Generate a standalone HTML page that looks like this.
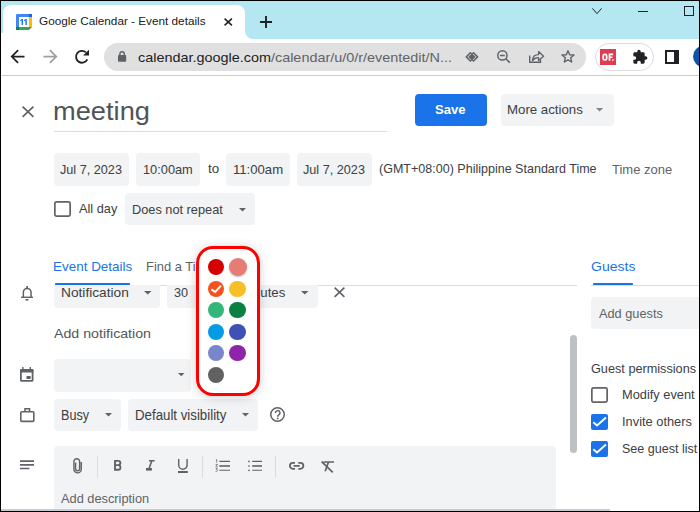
<!DOCTYPE html>
<html><head><meta charset="utf-8">
<style>
*{margin:0;padding:0;box-sizing:border-box}
html,body{width:700px;height:512px;overflow:hidden;background:#fff}
body{position:relative;font-family:"Liberation Sans",sans-serif;color:#3c4043}
.a{position:absolute}
.t{position:absolute;white-space:nowrap;line-height:1;transform-origin:0 0}
.chip{position:absolute;background:#f1f3f4;border-radius:4px}
svg{position:absolute;overflow:visible}
</style></head><body>
<!-- tab strip -->
<div class="a" style="left:0;top:0;width:700px;height:39px;background:#b4e7f2"></div>
<div class="a" style="left:3px;top:5px;width:242px;height:34px;background:#fff;border-radius:8px 8px 0 0"></div>
<div class="a" style="left:0;top:33px;width:4px;height:6px;background:#fff;border-radius:0 0 0 0"></div>
<!-- tab foot curve right -->
<div class="a" style="left:245px;top:31px;width:8px;height:8px;background:#fff"></div>
<div class="a" style="left:245px;top:23px;width:16px;height:16px;background:#b4e7f2;border-radius:0 0 0 8px"></div>
<!-- favicon -->
<svg style="left:16px;top:14px" width="16" height="16" viewBox="0 0 16 16">
<rect x="0" y="0" width="16" height="16" rx="1.2" fill="#4285f4"/>
<rect x="13" y="0" width="3" height="3" fill="#1967d2"/>
<rect x="13" y="3" width="3" height="10" fill="#fbbc04"/>
<rect x="0" y="13" width="13" height="3" fill="#34a853"/>
<rect x="0" y="13" width="3" height="3" fill="#188038"/>
<path d="M13 13H16L13 16z" fill="#ea4335"/>
<path d="M16 13V16H13z" fill="#fff"/>
<rect x="3" y="3" width="10" height="10" fill="#fff"/>
<path d="M5.6 4.9H7V11H5.6V6.6L4.3 7.2V6.1z M9.4 4.9H10.8V11H9.4V6.6L8.1 7.2V6.1z" fill="#1a73e8"/>
</svg>
<svg style="left:223.6px;top:17.8px" width="8.5" height="8" viewBox="0 0 8.5 8"><path d="M0.6 0.6L7.9 7.4M7.9 0.6L0.6 7.4" stroke="#202124" stroke-width="1.5"/></svg>
<svg style="left:260px;top:16px" width="12" height="12" viewBox="0 0 12 12"><path d="M6 0V12M0 6H12" stroke="#202124" stroke-width="1.9"/></svg>
<!-- window controls -->
<svg style="left:592px;top:7.7px" width="10" height="6.5" viewBox="0 0 10 6.5"><path d="M0.4 0.4L5 5.6L9.6 0.4" stroke="#202124" stroke-width="1" fill="none"/></svg>
<div class="a" style="left:638px;top:11px;width:10px;height:1px;background:#202124"></div>
<div class="a" style="left:684px;top:6px;width:10px;height:10px;border:1px solid #202124"></div>

<!-- toolbar -->
<svg style="left:7.3px;top:46px" width="21" height="21" viewBox="0 0 24 24"><path d="M20 11H7.83l5.59-5.59L12 4l-8 8 8 8 1.41-1.41L7.83 13H20v-2z" fill="#202124"/></svg>
<svg style="left:39.9px;top:46px" width="21" height="21" viewBox="0 0 24 24"><path d="M12 4l-1.41 1.41L16.17 11H4v2h12.17l-5.58 5.59L12 20l8-8z" fill="#a0a0a0"/></svg>
<svg style="left:70px;top:45px" width="25" height="25" viewBox="70 45 25 25"><path d="M87.3 59.3A5.9 5.9 0 1 1 85.9 52.4" stroke="#202124" stroke-width="1.85" fill="none"/><path d="M89 49.7V55.6H83.1z" fill="#202124"/></svg>
<div class="a" style="left:104px;top:43px;width:482px;height:28px;background:#e0e0e0;border-radius:14px"></div>
<svg style="left:117.9px;top:50.9px" width="8.2" height="11" viewBox="0 0 8.2 11"><path d="M1.9 4.5V3a2.2 2.2 0 0 1 4.4 0V4.5" stroke="#5f6368" stroke-width="1.4" fill="none"/><rect x="0" y="4" width="8.2" height="6.8" rx="0.8" fill="#5f6368"/></svg>
<!-- omnibox icons -->
<svg style="left:460px;top:46px" width="24" height="20" viewBox="460 46 24 20"><path d="M470.4 52.8L474.5 56.9L470.4 61L466.3 56.9zM473.5 52.8L477.6 56.9L473.5 61L469.4 56.9z" stroke="#5f6368" stroke-width="1.5" fill="none" stroke-linejoin="round"/><path d="M471.95 54.35L474.5 56.9L471.95 59.45L469.4 56.9z" fill="#5f6368"/></svg>
<svg style="left:497.4px;top:50.4px" width="13.3" height="13" viewBox="0 0 13.3 13"><circle cx="5.4" cy="5.4" r="4.6" stroke="#5f6368" stroke-width="1.5" fill="none"/><path d="M3 5.4H7.8M8.8 8.8L12.8 12.6" stroke="#5f6368" stroke-width="1.5"/></svg>
<svg style="left:528.9px;top:50.4px" width="15.4" height="13" viewBox="0 0 15.4 13"><path d="M0.7 5.5V12.3H11.5V9.8" stroke="#5f6368" stroke-width="1.4" fill="none"/><path d="M3.5 10.5C3.8 6.5 6.5 4.6 9.6 4.6V1.6L14.6 6.2L9.6 10.6V7.7C7 7.7 5 8.5 3.5 10.5z" stroke="#5f6368" stroke-width="1.3" fill="none" stroke-linejoin="round"/></svg>
<svg style="left:561px;top:50.4px" width="14" height="12.5" viewBox="0 0 14 12.5"><path d="M7 0.8L8.7 4.7L13 5L9.7 7.8L10.7 12L7 9.8L3.3 12L4.3 7.8L1 5L5.3 4.7z" stroke="#5f6368" stroke-width="1.4" fill="none" stroke-linejoin="round"/></svg>
<!-- extension pill -->
<div class="a" style="left:595px;top:43px;width:59px;height:28px;border:1px solid #dadce0;border-radius:14px"></div>
<div class="a" style="left:600px;top:49px;width:16px;height:16px;background:#e23b51"></div>
<svg style="left:596px;top:44px" width="28" height="26" viewBox="596 44 28 26"><rect x="603.15" y="54.4" width="3.5" height="5.5" rx="1.5" stroke="#fff" stroke-width="1.8" fill="none"/><path d="M608.6 53.5H613.1V55.2H610.4V56.4H612.4V58H610.4V60.8H608.6z" fill="#fff"/><path d="M612.3 59.2H613.9L613.2 60.9H612.3z" fill="#fff"/></svg>
<svg style="left:631.7px;top:49.3px" width="16" height="16" viewBox="0 0 24 24"><path d="M20.5 11H19V7c0-1.1-.9-2-2-2h-4V3.5C13 2.12 11.880 1 10.5 1S8 2.12 8 3.5V5H4c-1.1 0-1.99.9-1.99 2v3.8H3.5c1.49 0 2.7 1.21 2.7 2.7s-1.21 2.7-2.7 2.7H2V20c0 1.1.9 2 2 2h3.8v-1.5c0-1.49 1.21-2.7 2.7-2.7 1.49 0 2.7 1.21 2.7 2.7V22H17c1.1 0 2-.9 2-2v-4h1.5c1.38 0 2.5-1.12 2.5-2.5S21.88 11 20.5 11z" fill="#202124"/></svg>
<div class="a" style="left:665px;top:50px;width:14px;height:14px;border:2px solid #202124;border-right-width:5px"></div>
<div class="a" style="left:692.8px;top:46.3px;width:20.8px;height:20.8px;border-radius:50%;background:#0b57a8"></div>
<div class="a" style="left:0;top:75px;width:700px;height:1px;background:#cccccc"></div>

<!-- page -->
<svg style="left:22px;top:106.4px" width="12" height="11.5" viewBox="0 0 12 11.5"><path d="M0.6 0.6L11.4 10.9M11.4 0.6L0.6 10.9" stroke="#5f6368" stroke-width="1.7"/></svg>
<div class="a" style="left:54px;top:131px;width:333px;height:1px;background:#dadce0"></div>
<div class="a" style="left:415px;top:94px;width:72px;height:32px;background:#1a73e8;border-radius:4px"></div>
<div class="chip" style="left:501px;top:94px;width:113px;height:32px"></div>
<svg style="left:595.7px;top:108.3px" width="7.2" height="3.6" viewBox="0 0 7.2 3.6"><path d="M0 0H7.2L3.6 3.6z" fill="#80868b"/></svg>

<div class="chip" style="left:54px;top:153px;width:75px;height:33px"></div>
<div class="chip" style="left:136px;top:153px;width:64px;height:33px"></div>
<div class="chip" style="left:226px;top:153px;width:64px;height:33px"></div>
<div class="chip" style="left:297px;top:153px;width:74.5px;height:33px"></div>

<svg style="left:54px;top:201px" width="17" height="16" viewBox="0 0 17 16"><rect x="0.85" y="0.85" width="15.3" height="14.3" rx="1.6" stroke="#5f6368" stroke-width="1.7" fill="none"/></svg>
<div class="chip" style="left:125px;top:193px;width:130px;height:32px"></div>
<svg style="left:239.4px;top:207.6px" width="7" height="3.5" viewBox="0 0 7 3.5"><path d="M0 0H7L3.5 3.5z" fill="#5f6368"/></svg>

<!-- tab bar lines -->
<div class="a" style="left:54px;top:285px;width:523px;height:1px;background:#dadce0"></div>
<div class="a" style="left:591px;top:285px;width:109px;height:1px;background:#dadce0"></div>

<!-- notification row -->
<svg style="left:21px;top:286px" width="12" height="15" viewBox="0 0 12 15"><path d="M2.35 11.5V6.5A3.85 4.1 0 0 1 10.05 6.5V11.5" stroke="#5f6368" stroke-width="1.5" fill="none"/><path d="M0.1 11.3H12" stroke="#5f6368" stroke-width="1.4"/><rect x="5.2" y="0.1" width="1.8" height="2" fill="#5f6368"/><path d="M4.4 13.1H7.5V13.4A1.55 1.3 0 0 1 4.4 13.4z" fill="#5f6368"/></svg>
<div class="chip" style="left:54px;top:285px;width:105.5px;height:22.5px;border-radius:0 0 4px 4px"></div>
<svg style="left:144.4px;top:290.7px" width="7.5" height="3.5" viewBox="0 0 7.5 3.5"><path d="M0 0H7.5L3.75 3.5z" fill="#5f6368"/></svg>
<div class="chip" style="left:167px;top:285px;width:151px;height:22.5px;border-radius:0 0 4px 4px"></div>
<svg style="left:300.5px;top:290.7px" width="7.5" height="3.5" viewBox="0 0 7.5 3.5"><path d="M0 0H7.5L3.75 3.5z" fill="#5f6368"/></svg>
<svg style="left:334.3px;top:287px" width="11" height="10.5" viewBox="0 0 11 10.5"><path d="M0.6 0.6L10.4 9.9M10.4 0.6L0.6 9.9" stroke="#5f6368" stroke-width="1.6"/></svg>

<svg style="left:20px;top:367px" width="13.5" height="15" viewBox="0 0 13.5 15"><path d="M2.9 0V2.5M10.3 0V2.5" stroke="#5f6368" stroke-width="1.4"/><rect x="0.9" y="2.9" width="11.7" height="11" rx="1" stroke="#5f6368" stroke-width="1.8" fill="none"/><rect x="0" y="2" width="13.5" height="3.6" rx="1" fill="#5f6368"/><rect x="6.4" y="9" width="4.4" height="3" rx="0.9" fill="#5f6368"/></svg>
<div class="chip" style="left:54px;top:359px;width:137px;height:33px"></div>
<svg style="left:177.7px;top:372.6px" width="6.5" height="3.3" viewBox="0 0 6.5 3.3"><path d="M0 0H6.5L3.25 3.3z" fill="#5f6368"/></svg>

<svg style="left:19.7px;top:407.6px" width="14.6" height="14.2" viewBox="0 0 14.6 14.2"><rect x="0.8" y="3.8" width="13" height="9.6" rx="1" stroke="#5f6368" stroke-width="1.6" fill="none"/><path d="M5 3.8V0.8H9.5V3.8" stroke="#5f6368" stroke-width="1.6" fill="none"/></svg>
<div class="chip" style="left:54px;top:399px;width:67px;height:32px"></div>
<svg style="left:105.1px;top:413.2px" width="7" height="3.5" viewBox="0 0 7 3.5"><path d="M0 0H7L3.5 3.5z" fill="#5f6368"/></svg>
<div class="chip" style="left:128px;top:399px;width:130px;height:32px"></div>
<svg style="left:242px;top:413px" width="7" height="3.5" viewBox="0 0 7 3.5"><path d="M0 0H7L3.5 3.5z" fill="#5f6368"/></svg>
<svg style="left:270.1px;top:407.3px" width="15" height="15" viewBox="0 0 15 15"><circle cx="7.5" cy="7.5" r="6.75" stroke="#5f6368" stroke-width="1.5" fill="none"/><path d="M5.4 5.9a2.3 2.3 0 1 1 3.4 2c-.8.5-1.1.9-1.1 1.8" stroke="#5f6368" stroke-width="1.5" fill="none"/><rect x="6.9" y="10.7" width="1.6" height="1.6" fill="#5f6368"/></svg>

<!-- description -->
<svg style="left:19.8px;top:459px" width="14" height="11" viewBox="0 0 14 11"><path d="M0 2.1H14M0 5.9H14M0 9.5H9.3" stroke="#5f6368" stroke-width="1.6"/></svg>
<div class="chip" style="left:54px;top:446px;width:502px;height:70px"></div>
<svg style="left:73px;top:458.4px" width="9.2" height="15.2" viewBox="0 0 9.2 15.2"><path d="M2.6 4.5V10.8a2 2 0 0 0 4 0V3.6a2.85 2.85 0 0 0-5.7 0V11.2a3.7 3.7 0 0 0 7.4 0V4" stroke="#5f6368" stroke-width="1.4" fill="none"/></svg>
<div class="a" style="left:97px;top:456px;width:1px;height:22px;background:#dadce0"></div>
<svg style="left:113.7px;top:460.1px" width="7.5" height="10.7" viewBox="0 0 7.5 10.7"><path d="M1 0.9H4.2a2.2 2.1 0 0 1 0 4.2H1zM1 5.1H4.6a2.4 2.4 0 0 1 0 4.7H1z" stroke="#5f6368" stroke-width="1.9" fill="none"/></svg>
<svg style="left:145.6px;top:460.1px" width="8.6" height="10.6" viewBox="0 0 8.6 10.6"><path d="M3 0.75H8.6M0 9.3H5.8M5.8 0.75L2.8 9.3" stroke="#5f6368" stroke-width="1.6" fill="none"/><rect x="0" y="8" width="5.8" height="2.6" fill="#5f6368"/></svg>
<svg style="left:177.6px;top:459px" width="9.8" height="14" viewBox="0 0 9.8 14"><path d="M0.7 0V6.1a4.2 4.2 0 0 0 8.4 0V0" stroke="#5f6368" stroke-width="1.4" fill="none"/><rect x="0" y="12" width="9.8" height="2" fill="#5f6368"/></svg>
<div class="a" style="left:202px;top:456px;width:1px;height:22px;background:#dadce0"></div>
<svg style="left:215px;top:459px" width="15" height="12.5" viewBox="0 0 15 12.5"><path d="M4.3 2.4H15M4.3 11.3H15" stroke="#5f6368" stroke-width="1.1"/><path d="M4.3 7H15" stroke="#5f6368" stroke-width="1.6"/><path d="M0.9 1.1L1.7 0.6V3.6M0.6 5.4H2.5L0.8 7.9H2.7M0.7 9.6H2.5L1.5 10.8C2.9 10.9 2.9 12.7 0.6 12.4" stroke="#5f6368" stroke-width="0.75" fill="none"/></svg>
<svg style="left:248px;top:459px" width="14" height="12.5" viewBox="0 0 14 12.5"><path d="M4.2 2.4H14M4.2 11.3H14" stroke="#5f6368" stroke-width="1.1"/><path d="M4.2 7H14" stroke="#5f6368" stroke-width="1.6"/><circle cx="1" cy="2.4" r="0.85" fill="#5f6368"/><circle cx="1" cy="7" r="0.85" fill="#5f6368"/><circle cx="1" cy="11.3" r="0.85" fill="#5f6368"/></svg>
<div class="a" style="left:275px;top:456px;width:1px;height:22px;background:#dadce0"></div>
<svg style="left:288.5px;top:461.8px" width="15.3" height="7.7" viewBox="0 0 15.3 7.7"><path d="M6 0.9H3.85a2.95 2.95 0 0 0 0 5.9H6M9.3 0.9H11.45a2.95 2.95 0 0 1 0 5.9H9.3M4.6 3.85H10.7" stroke="#5f6368" stroke-width="1.8" fill="none"/></svg>
<svg style="left:321px;top:461px" width="13" height="12" viewBox="0 0 13 12"><path d="M2.5 1H13M7.5 1L4.2 10.2M0.6 0.6L11.8 11.4" stroke="#5f6368" stroke-width="1.7" fill="none"/></svg>

<!-- right panel -->
<div class="chip" style="left:591px;top:297px;width:120px;height:32px"></div>
<svg style="left:591.2px;top:387px" width="17" height="16" viewBox="0 0 17 16"><rect x="0.85" y="0.85" width="15.3" height="14.3" rx="1.6" stroke="#5f6368" stroke-width="1.7" fill="none"/></svg>
<svg style="left:591px;top:414px" width="17" height="16" viewBox="0 0 17 16"><rect width="17" height="16" rx="2" fill="#1a73e8"/><path d="M2.3 8.3L6 11.5L15 3.5" stroke="#fff" stroke-width="1.9" fill="none"/></svg>
<svg style="left:591px;top:441px" width="17" height="16" viewBox="0 0 17 16"><rect width="17" height="16" rx="2" fill="#1a73e8"/><path d="M2.3 8.3L6 11.5L15 3.5" stroke="#fff" stroke-width="1.9" fill="none"/></svg>

<!-- scrollbar -->
<div class="a" style="left:570px;top:335px;width:7px;height:118px;background:#bdc1c6;border-radius:4px"></div>
<div class="a" style="left:0;top:509px;width:610px;height:2px;background:#c8ccd1"></div>

<div class="t" style="left:39.48px;top:16px;font-size:11.5px;font-weight:normal;color:#202124;transform:scaleX(1.0216)">Google Calendar - Event details</div>
<div class="t" style="left:137.83px;top:51px;font-size:13.5px;font-weight:normal;color:#202124;transform:scaleX(1.0671)">calendar.google.com<span style="color:#5f6368">/calendar/u/0/r/eventedit/N...</span></div>
<div class="t" style="left:52.90px;top:98px;font-size:26px;font-weight:normal;color:#505458;transform:scaleX(1.0483)">meeting</div>
<div class="t" style="left:435.03px;top:103px;font-size:13.5px;font-weight:bold;color:#ffffff;transform:scaleX(0.9667)">Save</div>
<div class="t" style="left:507.42px;top:103px;font-size:13.5px;font-weight:normal;color:#3c4043;transform:scaleX(0.9816)">More actions</div>
<div class="t" style="left:60.46px;top:163px;font-size:13.5px;font-weight:normal;color:#3c4043;transform:scaleX(0.9375)">Jul 7, 2023</div>
<div class="t" style="left:143.05px;top:163px;font-size:13.5px;font-weight:normal;color:#3c4043;transform:scaleX(0.9471)">10:00am</div>
<div class="t" style="left:207.70px;top:162px;font-size:13.5px;font-weight:normal;color:#3c4043;transform:scaleX(0.9909)">to</div>
<div class="t" style="left:232.73px;top:163px;font-size:13.5px;font-weight:normal;color:#3c4043;transform:scaleX(0.9720)">11:00am</div>
<div class="t" style="left:303.36px;top:163px;font-size:13.5px;font-weight:normal;color:#3c4043;transform:scaleX(0.9375)">Jul 7, 2023</div>
<div class="t" style="left:379.27px;top:162px;font-size:13.5px;font-weight:normal;color:#3c4043;transform:scaleX(0.9279)">(GMT+08:00) Philippine Standard Time</div>
<div class="t" style="left:611.80px;top:163px;font-size:13.5px;font-weight:normal;color:#5f6368;transform:scaleX(0.9629)">Time zone</div>
<div class="t" style="left:79.10px;top:202px;font-size:13.5px;font-weight:normal;color:#3c4043;transform:scaleX(0.9450)">All day</div>
<div class="t" style="left:131.65px;top:203px;font-size:13.5px;font-weight:normal;color:#3c4043;transform:scaleX(0.9453)">Does not repeat</div>
<div class="t" style="left:52.70px;top:260px;font-size:13.5px;font-weight:normal;color:#1a73e8;transform:scaleX(0.9962)">Event Details</div>
<div class="t" style="left:145.74px;top:260px;font-size:13.5px;font-weight:normal;color:#5f6368;transform:scaleX(0.9560)">Find a Ti</div>
<div class="t" style="left:590.66px;top:260px;font-size:13.5px;font-weight:normal;color:#1a73e8;transform:scaleX(1.0390)">Guests</div>
<div class="t" style="left:60.68px;top:286px;font-size:13.5px;font-weight:normal;color:#3c4043;transform:scaleX(1.0154)">Notification</div>
<div class="t" style="left:173.86px;top:286px;font-size:13.5px;font-weight:normal;color:#3c4043;transform:scaleX(0.9357)">30</div>
<div class="t" style="left:239.02px;top:286px;font-size:13.5px;font-weight:normal;color:#3c4043;transform:scaleX(0.9783)">minutes</div>
<div class="t" style="left:53.70px;top:327px;font-size:13.5px;font-weight:normal;color:#52575b;transform:scaleX(1.0505)">Add notification</div>
<div class="t" style="left:60.90px;top:408px;font-size:14px;font-weight:normal;color:#3c4043;transform:scaleX(0.9033)">Busy</div>
<div class="t" style="left:134.75px;top:408px;font-size:14px;font-weight:normal;color:#3c4043;transform:scaleX(0.9474)">Default visibility</div>
<div class="t" style="left:61.40px;top:492px;font-size:13.5px;font-weight:normal;color:#5f6368;transform:scaleX(0.9478)">Add description</div>
<div class="t" style="left:598.70px;top:307px;font-size:13.5px;font-weight:normal;color:#5f6368;transform:scaleX(0.9448)">Add guests</div>
<div class="t" style="left:591.06px;top:362px;font-size:13.5px;font-weight:normal;color:#3c4043;transform:scaleX(0.9400)">Guest permissions</div>
<div class="t" style="left:622.35px;top:388px;font-size:13.5px;font-weight:normal;color:#3c4043;transform:scaleX(0.9493)">Modify event</div>
<div class="t" style="left:622.35px;top:415px;font-size:13.5px;font-weight:normal;color:#3c4043;transform:scaleX(0.9514)">Invite others</div>
<div class="t" style="left:622.37px;top:442px;font-size:13.5px;font-weight:normal;color:#3c4043;transform:scaleX(0.9288)">See guest list</div>

<!-- tab underlines -->
<div class="a" style="left:54.8px;top:282.8px;width:75.2px;height:2.2px;background:#1a73e8;border-radius:1px 1px 0 0"></div>
<div class="a" style="left:592.8px;top:282.8px;width:40px;height:2.2px;background:#1a73e8;border-radius:1px 1px 0 0"></div>

<!-- color popup -->
<div class="a" style="left:195.5px;top:245.5px;width:64.2px;height:150px;background:#fff;border:3.4px solid #ff0000;border-radius:17px;box-shadow:0 1px 10px rgba(60,64,67,0.26)"></div>
<div class="a" style="left:207.80px;top:258.70px;width:16.4px;height:16.4px;border-radius:50%;background:#d50000"></div>
<div class="a" style="left:229.10px;top:258.00px;width:18px;height:18px;border-radius:50%;background:#e67c73;box-shadow:0 1px 2px rgba(60,64,67,0.35)"></div>
<div class="a" style="left:207.80px;top:280.80px;width:16.4px;height:16.4px;border-radius:50%;background:#f4511e"></div>
<div class="a" style="left:229.30px;top:280.80px;width:16.9px;height:16.4px;border-radius:50%;background:#f6bf26"></div>
<div class="a" style="left:207.80px;top:301.80px;width:16.4px;height:16.4px;border-radius:50%;background:#33b679"></div>
<div class="a" style="left:229.30px;top:301.80px;width:16.9px;height:16.4px;border-radius:50%;background:#0b8043"></div>
<div class="a" style="left:207.80px;top:323.70px;width:16.4px;height:16.4px;border-radius:50%;background:#039be5"></div>
<div class="a" style="left:229.30px;top:323.70px;width:16.9px;height:16.4px;border-radius:50%;background:#3f51b5"></div>
<div class="a" style="left:207.80px;top:344.80px;width:16.4px;height:16.4px;border-radius:50%;background:#7986cb"></div>
<div class="a" style="left:229.30px;top:344.80px;width:16.9px;height:16.4px;border-radius:50%;background:#8e24aa"></div>
<div class="a" style="left:207.80px;top:366.80px;width:16.4px;height:16.4px;border-radius:50%;background:#616161"></div>
<svg style="left:210px;top:284px" width="12" height="9" viewBox="0 0 12 9"><path d="M1.4 5.4L5.2 8L11 1.6" stroke="#fff" stroke-width="2" fill="none"/></svg>
<!-- window border -->
<div class="a" style="left:0;top:0;width:700px;height:512px;border:1px solid #000;pointer-events:none"></div>
</body></html>
